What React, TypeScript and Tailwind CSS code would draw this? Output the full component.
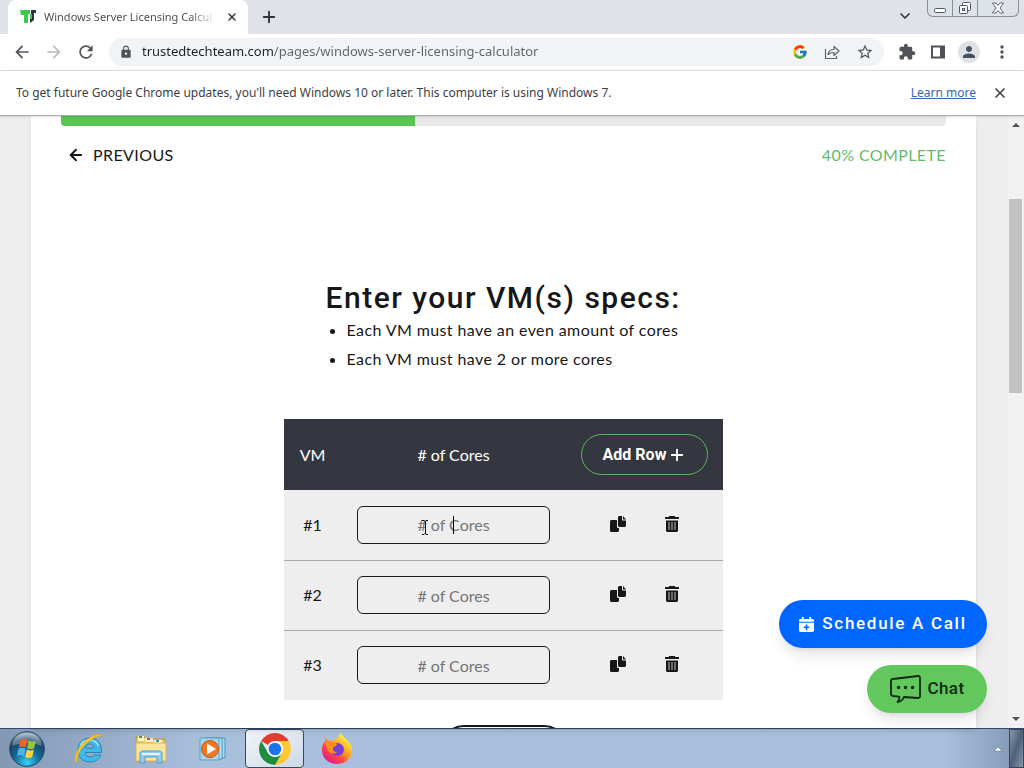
import type { ReactNode } from "react";
import { ArrowLeft, ChevronDown, Plus, X } from "lucide-react";
import { FcGoogle } from "react-icons/fc";
import {
  MdArrowBack,
  MdArrowForward,
  MdExtension,
  MdLock,
  MdMoreVert,
  MdPerson,
  MdRefresh,
  MdStarBorder,
} from "react-icons/md";

const vms = [1, 2, 3];

function FaviconLogo() {
  return (
    <svg className="h-4 w-4 shrink-0" viewBox="0 0 16 16" aria-hidden="true">
      <path d="M0 1h10v4H8v9H4V6H1z" fill="#3cc84b" />
      <path d="M11 1h5v3h-2v7l-4 3V6l1-1z" fill="#263540" />
      <path d="M10 5h2v5h-2z" fill="#3cc84b" />
    </svg>
  );
}

function ShareIcon() {
  return (
    <svg className="h-4 w-4" viewBox="0 0 16 16" fill="none" stroke="#5f6368" strokeWidth="1.2" aria-hidden="true">
      <path d="M1.5 5v9.5h11V12" />
      <path d="M4 10.500c.5-3.500 2.500-5 6-5V2.500l5 4.500-5 4.500v-3c-3 0-4.500.5-6 2z" strokeLinejoin="round" />
    </svg>
  );
}

function CopyIcon() {
  return (
    <svg className="h-4 w-4" viewBox="0 0 16 16" fill="#171719" aria-hidden="true">
      <path d="M7 4v6.500c0 1 .7 1.500 1.500 1.500H9v2.500c0 .8-.7 1.500-1.500 1.500h-6C.7 16 0 15.300 0 14.500v-9C0 4.700.7 4 1.500 4z" />
      <path d="M9.500 0H12v3.500c0 .5.500 1 1 1h3v5c0 .8-.7 1.500-1.500 1.500h-5C8.700 11 8 10.300 8 9.500v-8C8 .7 8.700 0 9.500 0z" />
      <path d="M13 0l3 3.500h-3z" />
    </svg>
  );
}

function TrashIcon() {
  return (
    <svg className="h-4 w-4" viewBox="0 0 16 16" aria-hidden="true">
      <path d="M5.500 0h5l1 1H15v2H1V1h3.500z" fill="#171719" />
      <path d="M2 4.500h12v10c0 .8-.7 1.500-1.500 1.500h-9c-.8 0-1.500-.7-1.500-1.500z" fill="#171719" />
      <path d="M5 6v8M8 6v8M11 6v8" stroke="#a5a5a5" strokeWidth="1.200" />
    </svg>
  );
}

function CalendarIcon() {
  return (
    <svg className="h-[15px] w-[15px]" viewBox="0 0 16 16" aria-hidden="true">
      <path
        d="M3 0h2v2h6V0h2v2h1.500c.8 0 1.500.7 1.500 1.500V5H0V3.500C0 2.700.7 2 1.500 2H3zM0 6h16v8.500c0 .8-.7 1.500-1.500 1.500h-13C.7 16 0 15.300 0 14.500z"
        fill="#fff"
      />
      <path d="M8 8v6M5 11h6" stroke="#0066ff" strokeWidth="1.700" />
    </svg>
  );
}

function ChatIcon() {
  return (
    <svg className="h-7 w-8" viewBox="0 0 32 28" fill="none" stroke="#102a12" strokeWidth="1.800" aria-hidden="true">
      <path
        d="M4 4l25-3c1.300-.1 2 .6 2 2v18c0 1.500-.7 2-2 2l-14-1c-1 2.500-3 4.500-6.500 5 1.700-1.800 2-3.500 1.700-5.300L4 21c-1.300-.2-2-.8-2-2V6c0-1.200.7-1.900 2-2z"
        strokeLinejoin="round"
      />
      <path d="M9.500 12.500h.1M16.500 12.500h.1M23.500 12.500h.1" strokeWidth="3.400" strokeLinecap="round" />
    </svg>
  );
}

function StartIcon() {
  return (
    <svg className="h-9 w-9" viewBox="0 0 36 36" aria-hidden="true">
      <defs>
        <radialGradient id="orb" cx="50%" cy="90%" r="85%">
          <stop offset="0" stopColor="#35d5f5" />
          <stop offset="0.450" stopColor="#126a9b" />
          <stop offset="0.800" stopColor="#1b4261" />
          <stop offset="1" stopColor="#8faabb" />
        </radialGradient>
      </defs>
      <circle cx="18" cy="18" r="17.300" fill="url(#orb)" stroke="#24445f" strokeWidth="1" />
      <path d="M3 15C5 6 11 2 18 2s13 4 15 13c-9-4-21-4-30 0z" fill="#fff" opacity="0.300" />
      <path d="M11.500 9c2.500-1.500 4.800-1.300 7 0l-1.600 7.500c-2.300-1.300-4.500-1.300-7 0z" fill="#f26322" />
      <path d="M19.700 9.700c2.300 1.300 4.600 1.300 7.100 0l-1.700 7.500c-2.500 1.300-4.700 1.300-7 0z" fill="#91c83e" />
      <path d="M9.600 17.700c2.400-1.400 4.700-1.300 7 0L15 25c-2.300-1.300-4.500-1.300-7 0z" fill="#4cb5ee" />
      <path d="M17.800 18.500c2.300 1.300 4.600 1.300 7 0L23.200 26c-2.500 1.300-4.700 1.300-7 0z" fill="#ffd13c" />
    </svg>
  );
}

function ExplorerIcon() {
  return (
    <svg className="h-8 w-8" viewBox="0 0 32 32" aria-hidden="true">
      <path
        d="M16.500 5C9.500 5 5 10 5 17s4.500 12 12 12c5.500 0 9.500-2.700 11-7h-7c-1 1.300-2.300 1.800-4 1.800-2.700 0-4.500-1.600-4.700-4.300h16.200C29 10.500 24.500 5 16.500 5zm-4 10c.4-2.500 2-4 4.400-4 2.300 0 4 1.500 4.300 4z"
        fill="#43b9e9"
        stroke="#2387be"
        strokeWidth="1"
      />
      <path d="M7 13c2-4 5-6 9-6 5 0 8 2 9.500 6" fill="none" stroke="#a1e4fa" strokeWidth="1.500" />
      <path
        d="M2.500 29C-1 24 9 6 22 2c4-1.300 7-1 7.500 1.500C27 1.500 22 4 16 8.500 8 14.500 3 23 4.500 29z"
        fill="#f5c62c"
        stroke="#d79d19"
        strokeWidth="0.500"
      />
    </svg>
  );
}

function FolderIcon() {
  return (
    <svg className="h-8 w-8" viewBox="0 0 32 32" aria-hidden="true">
      <path d="M1 4h9l1 2h19v22H1z" fill="#e9ca6d" stroke="#b59445" />
      <path d="M3 3h6v5H3zM10 5h8v4h-8zM19 7h8v3h-8z" fill="#fff4cb" />
      <path d="M4 3h3v2H4z" fill="#4f9737" />
      <path d="M12 5h3v2h-3z" fill="#d6502d" />
      <path d="M21 7h3v2h-3z" fill="#3b89c1" />
      <path d="M1 10h30v18H1z" fill="#f8e49b" stroke="#d2b865" />
      <path d="M5 30v-9c0-2 1-3 3-3h16c2 0 3 1 3 3v9h-5v-6H10v6z" fill="#93cceb" stroke="#4d9dca" />
      <path d="M7 21h18" stroke="#e0f5ff" strokeWidth="2" />
    </svg>
  );
}

function MediaIcon() {
  return (
    <svg className="h-7 w-7" viewBox="0 0 28 28" aria-hidden="true">
      <path d="M8 3h18v20H8z" fill="#a9d7ed" stroke="#4b94bd" />
      <path d="M5 3h18v21H5z" fill="#b9e0f2" stroke="#4b94bd" />
      <path d="M1 3h19v22H1z" fill="#a8d4ec" stroke="#5e9fc3" />
      <circle cx="11" cy="14" r="8.500" fill="#ef7822" stroke="#c9550f" />
      <path d="M8 8.500l9 5.500-9 5.500z" fill="#fff" />
    </svg>
  );
}

function ChromeIcon() {
  return (
    <svg className="h-8 w-8" viewBox="0 0 32 32" aria-hidden="true">
      <path d="M16 16L2.150 8A16 16 0 0 1 29.850 8z" fill="#e33b2e" />
      <path d="M16 16V8h13.850A16 16 0 0 1 16 32l6.930-12z" fill="#fcc934" />
      <path d="M16 32A16 16 0 0 1 2.150 8l6.920 12L16 24l6.930-4z" fill="#1e8e3e" />
      <circle cx="16" cy="16" r="8" fill="#fff" />
      <circle cx="16" cy="16" r="6.300" fill="#1a73e8" />
    </svg>
  );
}

function FirefoxIcon() {
  return (
    <svg className="h-8 w-8" viewBox="0 0 32 32" aria-hidden="true">
      <defs>
        <linearGradient id="flame" x1="0.900" y1="0.100" x2="0.200" y2="0.950">
          <stop offset="0.100" stopColor="#fff044" />
          <stop offset="0.450" stopColor="#ff9a22" />
          <stop offset="0.700" stopColor="#ff454b" />
          <stop offset="1" stopColor="#df178b" />
        </linearGradient>
      </defs>
      <path
        d="M20 0c1 3 4 5 6 7 3 3 5 6 5 10 0 8-6.500 14-15 14S1 25 1 17c0-4 1-6.500 3-9l1-3 2 3c2-.8 4-.6 5 0 2-2 4-2.500 5-2.500 0-2 1-4 3-5.500z"
        fill="url(#flame)"
      />
      <circle cx="16.500" cy="16.500" r="6.500" fill="#7340d7" />
      <path d="M4 9c3-2 6-1 8 1l4 1c0 2-3 2.500-4 4-.7 2 1 4 4 4-4 4-10 0-10-4z" fill="#ff8c1e" />
    </svg>
  );
}

function WindowControls() {
  return (
    <div className="mr-[5px] flex self-start rounded-b-md border border-t-0 border-[#898e96] bg-[#dde1e8]">
      <button
        type="button"
        aria-label="Minimize"
        className="flex h-4 w-[25px] items-center justify-center border-r border-[#898e96]"
      >
        <svg className="h-4 w-4" viewBox="0 0 16 16" fill="#fff" stroke="#505763" aria-hidden="true">
          <rect x="2.500" y="8.500" width="11" height="4" rx="1" />
        </svg>
      </button>
      <button
        type="button"
        aria-label="Restore"
        className="flex h-4 w-[25px] items-center justify-center border-r border-[#898e96]"
      >
        <svg className="h-4 w-4" viewBox="0 0 16 16" fill="#fff" stroke="#505763" aria-hidden="true">
          <rect x="5.500" y="2.500" width="8" height="8" rx="1" />
          <rect x="2.500" y="5.500" width="8" height="8" rx="1" />
          <rect x="5.500" y="8.500" width="2" height="2" />
        </svg>
      </button>
      <button type="button" aria-label="Close window" className="flex h-4 w-10 items-center justify-center">
        <svg className="h-4 w-4" viewBox="0 0 16 16" fill="#fff" stroke="#505763" strokeWidth="0.900" aria-hidden="true">
          <path d="M2.500 3h3.500l2 2.500L10 3h3.500l-3.500 5 3.500 5H10l-2-2.500L6 13H2.500L6 8z" />
        </svg>
      </button>
    </div>
  );
}

function TabStrip() {
  return (
    <div className="flex h-[34px] shrink-0 items-end bg-[#dfe2e9]">
      <div className="ml-2 flex h-[34px] w-60 items-center rounded-t-lg bg-white pr-2 pl-3">
        <FaviconLogo />
        <span className="ml-2 min-w-0 flex-1 overflow-hidden whitespace-nowrap bg-gradient-to-r from-[#45494d] from-85% to-transparent bg-clip-text text-[11px] text-transparent">
          Windows Server Licensing Calcul
        </span>
        <button type="button" aria-label="Close tab" className="ml-2 p-0.5">
          <X className="h-3 w-3 text-[#333]" strokeWidth={3} />
        </button>
      </div>
      <button type="button" aria-label="New tab" className="mb-2 ml-3">
        <Plus className="h-[18px] w-[18px] text-[#333]" strokeWidth={2.5} />
      </button>
      <div className="flex-1" />
      <button type="button" aria-label="Search tabs" className="mr-3.5 mb-2.5">
        <ChevronDown className="h-4 w-4 text-[#333]" strokeWidth={2.5} />
      </button>
      <WindowControls />
    </div>
  );
}

function Toolbar() {
  return (
    <div className="flex h-[37px] shrink-0 items-center border-b border-[#dadce0] bg-white text-[#4f5358]">
      <div className="flex w-[109px] items-center gap-3 pl-3">
        <button type="button" aria-label="Back">
          <MdArrowBack className="h-5 w-5" />
        </button>
        <button type="button" aria-label="Forward">
          <MdArrowForward className="h-5 w-5 text-[#b8babd]" />
        </button>
        <button type="button" aria-label="Reload">
          <MdRefresh className="h-5 w-5" />
        </button>
      </div>
      <div className="flex h-7 min-w-0 flex-1 items-center rounded-full bg-[#f1f3f4] px-2.5">
        <MdLock className="h-3.5 w-3.5 shrink-0" />
        {/* the host part of the address is darker than its path */}
        <input
          type="text"
          aria-label="Address"
          defaultValue="trustedtechteam.com/pages/windows-server-licensing-calculator"
          className="ml-[9px] min-w-0 flex-1 bg-linear-to-r from-[#202124] from-[131px] to-[#5f6368] to-[131px] bg-clip-text text-[13px] text-transparent outline-none"
        />
        <div className="flex items-center gap-4">
          <button type="button" aria-label="Search with Google">
            <FcGoogle className="h-4 w-4" />
          </button>
          <button type="button" aria-label="Share">
            <ShareIcon />
          </button>
          <button type="button" aria-label="Bookmark">
            <MdStarBorder className="h-[18px] w-[18px]" />
          </button>
        </div>
      </div>
      <div className="flex items-center gap-3 pr-3 pl-3.5">
        <button type="button" aria-label="Extensions" className="mr-0.5">
          <MdExtension className="h-[18px] w-[18px]" />
        </button>
        <button type="button" aria-label="Side panel">
          <svg className="h-4 w-4" viewBox="0 0 16 16" aria-hidden="true">
            <path d="M2 2.500h12v11H2z" fill="none" stroke="#4f5358" strokeWidth="2" />
            <path d="M10 2h5v12h-5z" fill="#4f5358" />
          </svg>
        </button>
        <button
          type="button"
          aria-label="Profile"
          className="flex h-[22px] w-[22px] items-center justify-center rounded-full bg-[#dfe1e6]"
        >
          <MdPerson className="h-[18px] w-[18px] text-[#45505f]" />
        </button>
        <button type="button" aria-label="Menu">
          <MdMoreVert className="h-5 w-5" />
        </button>
      </div>
    </div>
  );
}

function InfoBar() {
  return (
    <div className="z-10 flex h-[45px] shrink-0 items-center border-b border-[#aaa] bg-white px-4 text-[12px] shadow-sm">
      <p className="flex-1 text-[#3c4043]">
        To get future Google Chrome updates, you'll need Windows 10 or later. This computer is using Windows 7.
      </p>
      <a href="#learn" className="text-[#3468ac] underline">
        Learn more
      </a>
      <button type="button" aria-label="Dismiss" className="ml-4">
        <X className="h-4 w-4 text-[#444]" strokeWidth={2.5} />
      </button>
    </div>
  );
}

function VmTable() {
  return (
    <table className="mx-auto mt-[46px] w-[439px] table-fixed border-collapse text-center text-[16px] text-[#171719]">
      <colgroup>
        <col className="w-[57px]" />
        <col />
        <col className="w-[157px]" />
      </colgroup>
      <thead>
        <tr className="h-[71px] bg-[#353740] text-white">
          <th scope="col" className="font-normal">VM</th>
          <th scope="col" className="font-normal"># of Cores</th>
          <th scope="col" className="pr-[15px]">
            <button
              type="button"
              className="ml-auto flex h-[41px] w-[127px] items-center justify-center gap-0.5 rounded-full border border-[#5db562] font-['Roboto',sans-serif] text-[16px] font-bold whitespace-nowrap"
            >
              Add Row
              <Plus className="h-[18px] w-[18px]" strokeWidth={2.5} />
            </button>
          </th>
        </tr>
      </thead>
      <tbody className="bg-[#eee]">
        {vms.map((vm) => (
          <tr key={vm} className="h-[70px] border-b border-[#aaa] last:border-0">
            <td>
              <label htmlFor={`vm-${vm}`}>#{vm}</label>
            </td>
            <td>
              <div className="relative mx-4">
                <input
                  id={`vm-${vm}`}
                  type="text"
                  placeholder="# of Cores"
                  className="block h-[38px] w-full rounded-md border border-[#171719] bg-transparent text-center text-[16px] outline-none placeholder:text-[#757575]"
                />
                {vm === 1 ? (
                  <>
                    <span className="absolute top-2.5 left-24 h-[18px] w-px bg-black" />
                    <svg
                      className="absolute top-[13px] left-16 h-[17px] w-2"
                      viewBox="0 0 8 17"
                      fill="none"
                      stroke="#111"
                      aria-hidden="true"
                    >
                      <path d="M1 1.500h2l1 1 1-1h2M4.500 2v13M1 15.500h2l1-1 1 1h2" />
                    </svg>
                  </>
                ) : null}
              </div>
            </td>
            <td>
              <div className="flex justify-end gap-[38px] pr-[43px] pb-0.5">
                <button type="button" aria-label={`Copy VM ${vm}`}>
                  <CopyIcon />
                </button>
                <button type="button" aria-label={`Delete VM ${vm}`}>
                  <TrashIcon />
                </button>
              </div>
            </td>
          </tr>
        ))}
      </tbody>
    </table>
  );
}

function Calculator() {
  return (
    <main className="mx-[31px] h-full overflow-hidden bg-white px-[30px] font-['Lato',sans-serif] text-[16px] text-[#171719] shadow-md">
      <div className="h-2.5 overflow-hidden rounded-b-sm bg-[#e9e9e9]">
        <div className="h-full w-2/5 bg-[#57c653]" />
      </div>
      <div className="mt-[17px] flex items-center justify-between tracking-wide">
        <button type="button" className="ml-1.5 flex items-center gap-2 tracking-wide">
          <ArrowLeft className="h-[18px] w-[18px]" strokeWidth={2.5} />
          PREVIOUS
        </button>
        <span className="text-[#65b96b]">40% COMPLETE</span>
      </div>
      <div className="mx-auto mt-[113px] w-[356px]">
        <h1 className="font-['Roboto',sans-serif] text-[30px] leading-[35px] font-medium tracking-wider whitespace-nowrap">
          Enter your VM(s) specs:
        </h1>
        <ul className="list-disc pl-[21px] leading-[29px] tracking-wide">
          <li>Each VM must have an even amount of cores</li>
          <li>Each VM must have 2 or more cores</li>
        </ul>
      </div>
      <VmTable />
      <div className="mt-[25px] flex justify-center">
        <button
          type="button"
          aria-label="Continue"
          className="h-12 w-32 rounded-full border-2 border-[#171719]"
        />
      </div>
    </main>
  );
}

function FloatingActions() {
  return (
    <div className="absolute right-5 bottom-[15px] flex flex-col items-end gap-[17px] font-['Roboto',sans-serif] text-[17px] font-medium">
      <button
        type="button"
        className="flex h-12 w-52 items-center justify-center gap-2 rounded-full bg-[#0066ff] tracking-widest whitespace-nowrap text-white shadow-lg"
      >
        <CalendarIcon />
        Schedule A Call
      </button>
      <button
        type="button"
        className="flex h-12 w-[120px] items-center justify-center gap-1.5 rounded-full bg-[#62c75d] tracking-wide text-[#102a12] shadow-lg"
      >
        <ChatIcon />
        Chat
      </button>
    </div>
  );
}

function Scrollbar() {
  return (
    <div className="flex w-[17px] shrink-0 flex-col items-center bg-[#f1f1f1] py-[5px]" aria-hidden="true">
      <svg className="h-2 w-2" viewBox="0 0 8 8">
        <path d="M0 6l4-4 4 4z" fill="#505050" />
      </svg>
      <div className="mt-[70px] h-[194px] w-[13px] bg-[#c1c1c1]" />
      <svg className="mt-auto h-2 w-2" viewBox="0 0 8 8">
        <path d="M0 2l4 4 4-4z" fill="#505050" />
      </svg>
    </div>
  );
}

function TaskButton({ label, active, children }: { label: string; active?: boolean; children: ReactNode }) {
  return (
    <button
      type="button"
      aria-label={label}
      className={`flex h-[39px] w-[59px] items-center justify-center ${
        active ? "rounded-sm border border-[#39495c] bg-gradient-to-br from-[#f3f5f8] to-[#cdd9e8]" : ""
      }`}
    >
      {children}
    </button>
  );
}

function Taskbar() {
  return (
    <footer className="flex h-10 shrink-0 items-center border-t border-[#30486d] bg-gradient-to-r from-[#8498b4] via-[#a9c0dc] via-20% to-[#a9c0dc]">
      <button type="button" aria-label="Start" className="mr-3.5 ml-[9px]">
        <StartIcon />
      </button>
      <div className="flex gap-[3px]">
        <TaskButton label="Internet Explorer">
          <ExplorerIcon />
        </TaskButton>
        <TaskButton label="File Explorer">
          <FolderIcon />
        </TaskButton>
        <TaskButton label="Media Player">
          <MediaIcon />
        </TaskButton>
        <TaskButton label="Chrome" active>
          <ChromeIcon />
        </TaskButton>
        <TaskButton label="Firefox">
          <FirefoxIcon />
        </TaskButton>
      </div>
      <div className="ml-auto flex h-full w-20 items-center justify-end bg-gradient-to-r from-transparent to-[#8094b0]">
        <button type="button" aria-label="Show hidden icons" className="mr-1.5">
          <svg className="h-2 w-2.5" viewBox="0 0 10 8" aria-hidden="true">
            <path d="M1 6l4-4 4 4z" fill="#fff" stroke="#5d7088" strokeWidth="0.500" />
          </svg>
        </button>
        <button
          type="button"
          aria-label="Show desktop"
          className="h-full w-[15px] border border-[#35445a] bg-gradient-to-br from-[#8999ad] via-[#4f6078] to-[#8999ad]"
        />
      </div>
    </footer>
  );
}

export default function App() {
  return (
    <div className="flex h-screen flex-col overflow-hidden bg-white font-['Noto_Sans',sans-serif]">
      <TabStrip />
      <Toolbar />
      <InfoBar />
      <div className="flex min-h-0 flex-1">
        <div className="relative min-w-0 flex-1 bg-[#eee]">
          <Calculator />
          <FloatingActions />
        </div>
        <Scrollbar />
      </div>
      <Taskbar />
    </div>
  );
}
